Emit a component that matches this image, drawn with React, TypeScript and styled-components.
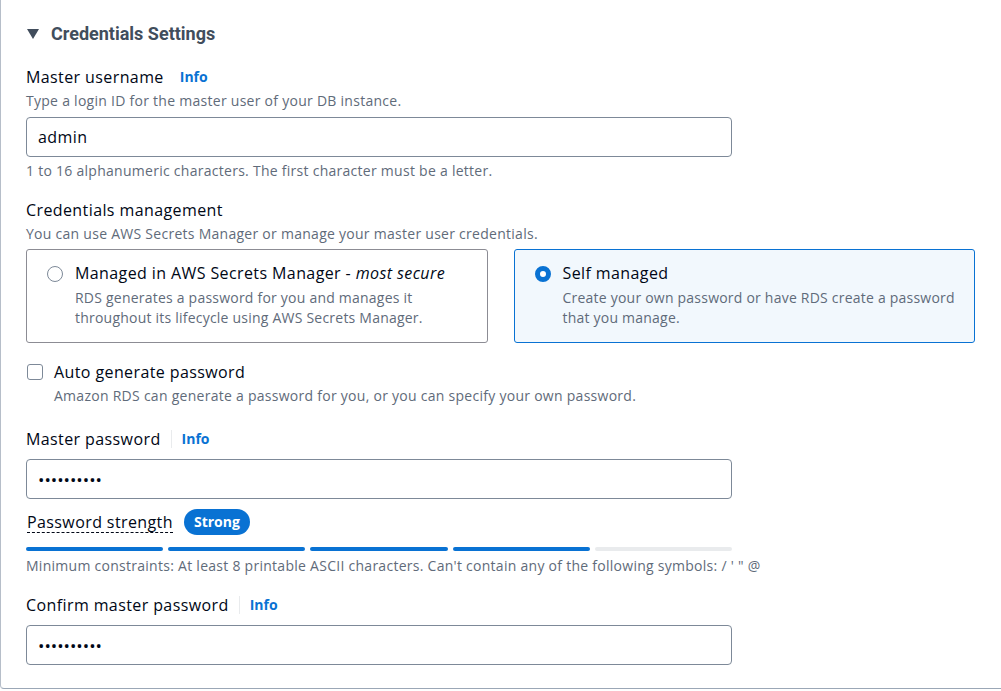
import React from "react";
import styled, { createGlobalStyle } from "styled-components";

const Global = createGlobalStyle`
  html, body { margin: 0; padding: 0; background: #ffffff; overflow: hidden; }
  body { font-family: "Open Sans", "Noto Sans", Arial, sans-serif; color: #000716; }
  * { box-sizing: border-box; }
`;

const Panel = styled.section`
  width: 100%;
  border-left: 1px solid #b6bec9;
  border-bottom: 1px solid #9ba7b6;
  border-bottom-left-radius: 4px;
  padding: 22px 0 23px 25px;
  display: flex;
  flex-direction: column;
`;

const Header = styled.div`
  display: flex;
  align-items: center;
  gap: 12px;
  height: 24px;
`;

const Caret = styled.span`
  width: 0;
  height: 0;
  margin-left: 1px;
  border-left: 6px solid transparent;
  border-right: 6px solid transparent;
  border-top: 10px solid #414d5c;
`;

const Title = styled.h2`
  margin: 0;
  font-family: Roboto, "Open Sans", Arial, sans-serif;
  font-size: 18px;
  font-weight: 700;
  line-height: 24px;
  color: #414d5c;
`;

const Block = styled.div<{ $top: number }>`
  margin-top: ${(p) => p.$top}px;
  display: flex;
  flex-direction: column;
`;

const LabelRow = styled.div<{ $divided?: boolean }>`
  display: flex;
  align-items: center;
  gap: ${(p) => (p.$divided ? 10 : 16)}px;
  height: 22px;
`;

const Label = styled.span`
  font-size: 16px;
  line-height: 22px;
  letter-spacing: 0.4px;
  color: #000716;
`;

const Divider = styled.span`
  width: 1px;
  height: 18px;
  background: #e9ebed;
`;

const InfoLink = styled.a`
  font-size: 14px;
  font-weight: 700;
  line-height: 22px;
  color: #0972d3;
  text-decoration: none;
`;

const Hint = styled.div<{ $top: number }>`
  margin-top: ${(p) => p.$top}px;
  font-size: 14px;
  line-height: 20px;
  letter-spacing: 0.27px;
  color: #5f6b7a;
`;

const TextInput = styled.input<{ $top: number }>`
  margin-top: ${(p) => p.$top}px;
  width: 706px;
  height: 40px;
  border: 1px solid #7d8998;
  border-radius: 4px;
  padding: 0 11px;
  font-family: inherit;
  font-size: 16px;
  letter-spacing: 0.4px;
  color: #000716;
  background: #ffffff;
  outline: none;
  &[type="password"] {
    font-size: 17px;
    letter-spacing: 0;
  }
`;

const Cards = styled.div`
  margin-top: 5px;
  width: 949px;
  display: grid;
  grid-template-columns: 1fr 1fr;
  gap: 26px;
`;

const Card = styled.label<{ $selected?: boolean }>`
  display: flex;
  gap: 12px;
  height: 94px;
  padding: 12px 14px 14px 20px;
  border: 1px solid ${(p) => (p.$selected ? "#0972d3" : "#8c8c94")};
  border-radius: 3px;
  background: ${(p) => (p.$selected ? "#f2f8fd" : "#ffffff")};
`;

const Radio = styled.span<{ $checked?: boolean }>`
  flex: none;
  margin-top: 4px;
  width: 16px;
  height: 16px;
  border-radius: 50%;
  border: ${(p) => (p.$checked ? "5px solid #0972d3" : "1.5px solid #7d8998")};
  background: #ffffff;
`;

const CardBody = styled.div`
  display: flex;
  flex-direction: column;
`;

const OptionTitle = styled.span`
  font-size: 16px;
  line-height: 22px;
  letter-spacing: 0.4px;
  color: #000716;
  em { font-style: italic; }
`;

const OptionDesc = styled.span`
  margin-top: 4px;
  font-size: 14px;
  line-height: 20px;
  letter-spacing: 0.22px;
  color: #5f6b7a;
`;

const CheckRow = styled.div`
  display: flex;
  gap: 11px;
`;

const CheckBox = styled.span`
  flex: none;
  margin-top: 3px;
  margin-left: 1px;
  width: 16px;
  height: 16px;
  border: 1.5px solid #7d8998;
  border-radius: 3px;
  background: #ffffff;
`;

const CheckBody = styled.div`
  display: flex;
  flex-direction: column;
`;

const CheckDesc = styled.span`
  margin-top: 3px;
  font-size: 14px;
  line-height: 20px;
  letter-spacing: 0.27px;
  color: #5f6b7a;
`;

const StrengthRow = styled.div`
  margin-top: 10px;
  height: 26px;
  display: flex;
  align-items: center;
  gap: 11px;
`;

const Dotted = styled.span`
  font-size: 16px;
  line-height: 20px;
  letter-spacing: 0.4px;
  color: #000716;
  border-bottom: 1px dashed #000716;
  margin-left: 1px;
`;

const Badge = styled.span`
  height: 26px;
  padding: 0 10px;
  border-radius: 13px;
  background: #0972d3;
  color: #ffffff;
  font-size: 14px;
  font-weight: 700;
  line-height: 26px;
`;

const Meter = styled.div`
  margin-top: 12px;
  width: 706px;
  display: grid;
  grid-template-columns: repeat(5, 1fr);
  gap: 5px;
`;

const Segment = styled.span<{ $on: boolean }>`
  height: 4px;
  border-radius: 2px;
  background: ${(p) => (p.$on ? "#0972d3" : "#e9ebed")};
`;

export default function App() {
  return (
    <>
      <Global />
      <Panel>
        <Header>
          <Caret />
          <Title>Credentials Settings</Title>
        </Header>

        <Block $top={20}>
          <LabelRow>
            <Label>Master username</Label>
            <InfoLink>Info</InfoLink>
          </LabelRow>
          <Hint $top={3}>Type a login ID for the master user of your DB instance.</Hint>
          <TextInput $top={6} type="text" value="admin" readOnly />
          <Hint $top={4}>1 to 16 alphanumeric characters. The first character must be a letter.</Hint>
        </Block>

        <Block $top={18}>
          <LabelRow>
            <Label>Credentials management</Label>
          </LabelRow>
          <Hint $top={3}>You can use AWS Secrets Manager or manage your master user credentials.</Hint>
          <Cards>
            <Card>
              <Radio />
              <CardBody>
                <OptionTitle>
                  Managed in AWS Secrets Manager - <em>most secure</em>
                </OptionTitle>
                <OptionDesc>
                  RDS generates a password for you and manages it throughout its lifecycle using AWS Secrets Manager.
                </OptionDesc>
              </CardBody>
            </Card>
            <Card $selected>
              <Radio $checked />
              <CardBody>
                <OptionTitle>Self managed</OptionTitle>
                <OptionDesc>Create your own password or have RDS create a password that you manage.</OptionDesc>
              </CardBody>
            </Card>
          </Cards>
        </Block>

        <Block $top={18}>
          <CheckRow>
            <CheckBox />
            <CheckBody>
              <OptionTitle>Auto generate password</OptionTitle>
              <CheckDesc>Amazon RDS can generate a password for you, or you can specify your own password.</CheckDesc>
            </CheckBody>
          </CheckRow>
        </Block>

        <Block $top={22}>
          <LabelRow $divided>
            <Label>Master password</Label>
            <Divider />
            <InfoLink>Info</InfoLink>
          </LabelRow>
          <TextInput $top={9} type="password" value="abcdefghij" readOnly />
          <StrengthRow>
            <Dotted>Password strength</Dotted>
            <Badge>Strong</Badge>
          </StrengthRow>
          <Meter>
            {[true, true, true, true, false].map((on, i) => (
              <Segment key={i} $on={on} />
            ))}
          </Meter>
          <Hint $top={5}>
            Minimum constraints: At least 8 printable ASCII characters. Can't contain any of the following symbols: / ' " @
          </Hint>
        </Block>

        <Block $top={18}>
          <LabelRow $divided>
            <Label>Confirm master password</Label>
            <Divider />
            <InfoLink>Info</InfoLink>
          </LabelRow>
          <TextInput $top={9} type="password" value="abcdefghij" readOnly />
        </Block>
      </Panel>
    </>
  );
}
